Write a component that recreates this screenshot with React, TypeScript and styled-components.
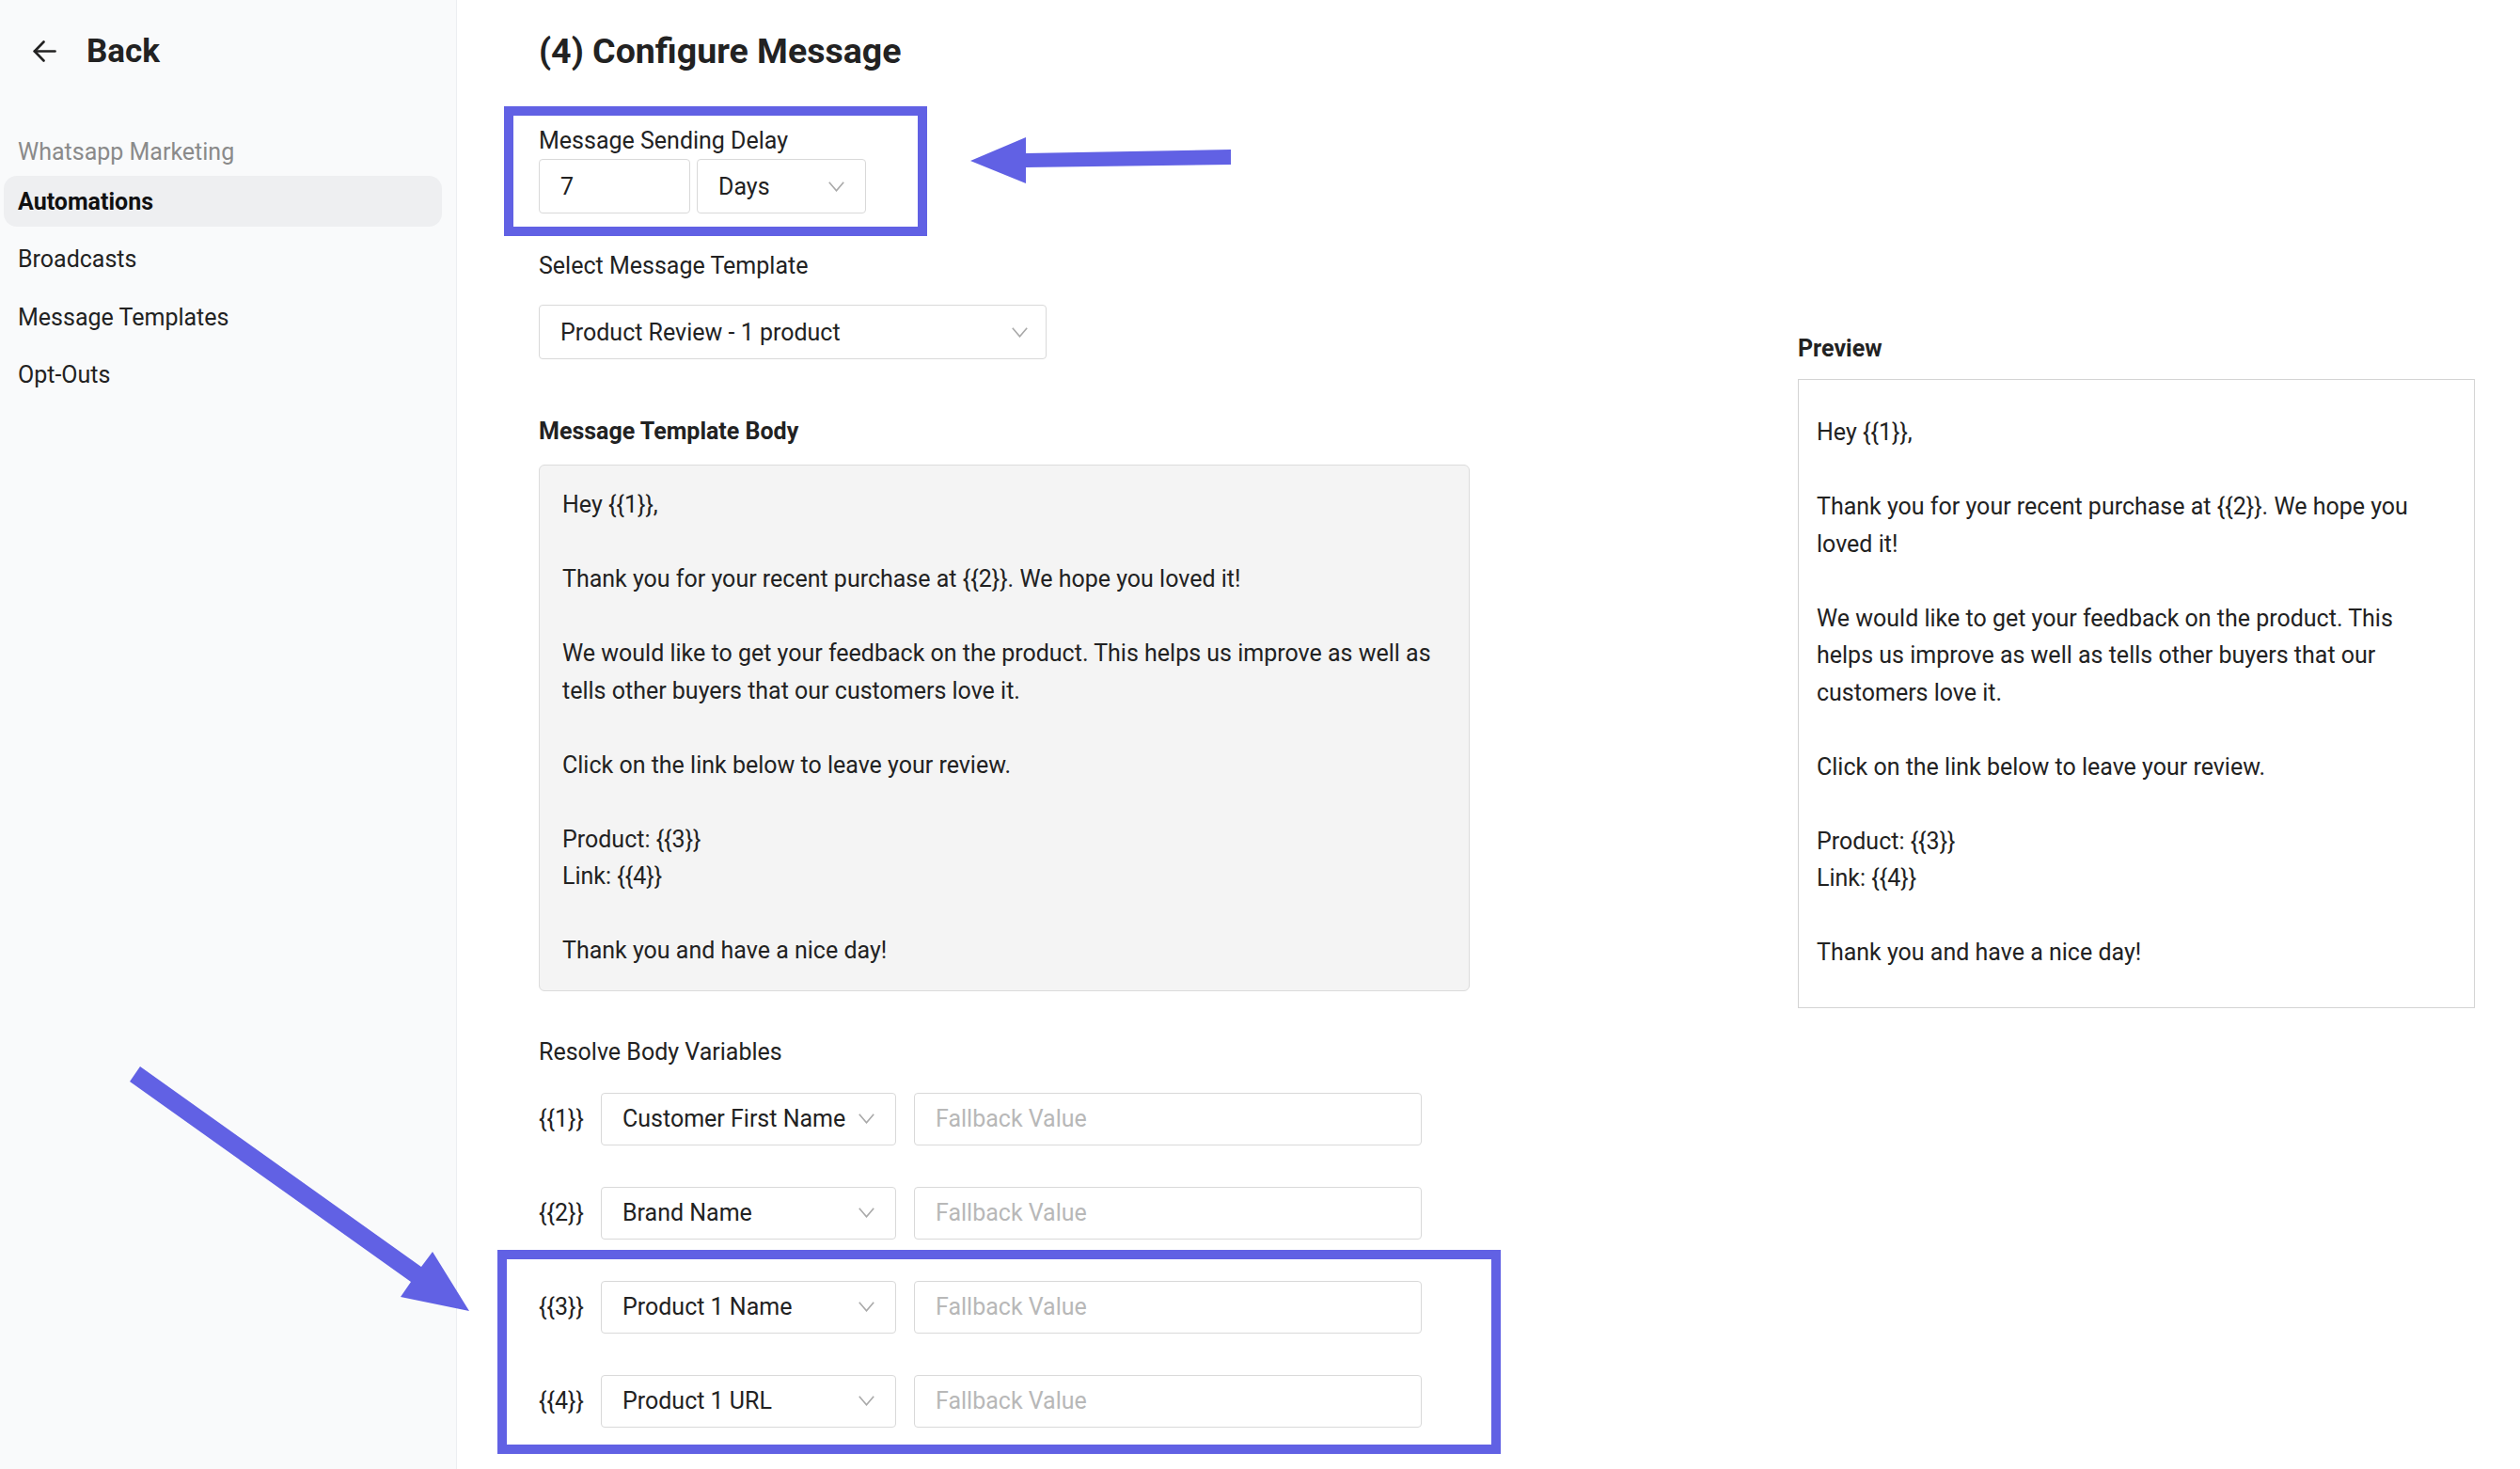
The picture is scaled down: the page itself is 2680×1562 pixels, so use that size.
import React from 'react';
import styled, { createGlobalStyle } from 'styled-components';

const GlobalStyle = createGlobalStyle`
  * { box-sizing: border-box; }
  html, body {
    margin: 0;
    padding: 0;
    background: #ffffff;
  }
  body {
    font-family: Roboto, 'Liberation Sans', Arial, sans-serif;
    color: #222222;
    overflow: hidden;
  }
`;

const accent = '#6161e4';

const Page = styled.div`
  position: relative;
  display: flex;
  width: 2680px;
  height: 1562px;
`;

const Sidebar = styled.aside`
  width: 486px;
  flex-shrink: 0;
  background: #f9fafb;
  box-shadow: inset -1px 0 0 #eceef1;
  padding-top: 29px;
`;

const BackRow = styled.div`
  display: flex;
  align-items: center;
  gap: 32px;
  height: 50px;
  padding-left: 35px;
  font-size: 35px;
  font-weight: 700;
  color: #222;
`;

const GroupTitle = styled.div`
  margin: 68px 0 10px 19px;
  font-size: 25px;
  line-height: 30px;
  color: #8a8a8a;
`;

const NavList = styled.nav`
  display: flex;
  flex-direction: column;
  gap: 7.5px;
`;

const NavItem = styled.div<{ $active?: boolean }>`
  display: flex;
  align-items: center;
  height: 54px;
  width: 466px;
  margin-left: 4px;
  padding-left: 15px;
  border-radius: 14px;
  font-size: 25px;
  font-weight: ${p => (p.$active ? 700 : 400)};
  color: ${p => (p.$active ? '#111' : '#222')};
  background: ${p => (p.$active ? '#eeeff1' : 'transparent')};
`;

const Main = styled.main`
  flex: 1;
  display: flex;
  padding: 0 48px 0 87px;
`;

const FormColumn = styled.div`
  width: 1040px;
  display: flex;
  flex-direction: column;
`;

const Title = styled.h1`
  margin: 31px 0 0;
  font-size: 37.5px;
  line-height: 46px;
  font-weight: 700;
  color: #222;
`;

const Section = styled.section<{ $mt: number }>`
  position: relative;
  margin-top: ${p => p.$mt}px;
`;

const Label = styled.div<{ $mb: number; $bold?: boolean }>`
  font-size: 25px;
  line-height: 30px;
  font-weight: ${p => (p.$bold ? 700 : 400)};
  margin-bottom: ${p => p.$mb}px;
  color: #222;
`;

const InputRow = styled.div`
  display: flex;
  gap: 7px;
`;

const Field = styled.div<{ $w: number; $h?: number; $placeholder?: boolean }>`
  display: flex;
  align-items: center;
  justify-content: space-between;
  width: ${p => p.$w}px;
  height: ${p => p.$h ?? 58}px;
  padding: 0 22px;
  border: 1px solid #d9d9d9;
  border-radius: 4px;
  background: #fff;
  font-size: 25px;
  color: ${p => (p.$placeholder ? '#b8b8b8' : '#222')};
  white-space: nowrap;
`;

const TemplateBody = styled.div`
  width: 990px;
  padding: 22px 24px;
  border: 1px solid #dcdcdc;
  border-radius: 6px;
  background: #f4f4f4;
  font-size: 25px;
  line-height: 39.5px;
  white-space: pre-wrap;
  color: #222;
`;

const Rows = styled.div`
  display: flex;
  flex-direction: column;
  gap: 44px;
`;

const RowsGroup = styled.div`
  position: relative;
  display: flex;
  flex-direction: column;
  gap: 44px;
`;

const VarRow = styled.div`
  display: flex;
  align-items: center;
`;

const VarLabel = styled.div`
  width: 47px;
  margin-right: 19px;
  font-size: 25px;
  color: #222;
`;

const VarFields = styled.div`
  display: flex;
  gap: 19px;
`;

const Annotation = styled.div<{ $top: number; $left: number; $w: number; $h: number }>`
  position: absolute;
  top: ${p => p.$top}px;
  left: ${p => p.$left}px;
  width: ${p => p.$w}px;
  height: ${p => p.$h}px;
  border: 10px solid ${accent};
  pointer-events: none;
`;

const PreviewColumn = styled.div`
  width: 720px;
  margin-left: auto;
  margin-top: 356px;
`;

const PreviewBox = styled.div`
  border: 1px solid #d4d4d4;
  padding: 36px 44px 38px 19px;
  font-size: 25px;
  line-height: 39.5px;
  white-space: pre-wrap;
  color: #222;
`;

const ArrowLayer = styled.svg`
  position: absolute;
  top: 0;
  left: 0;
  pointer-events: none;
`;

const BackArrow = () => (
  <svg width="25" height="23" viewBox="0 0 25 23" fill="none" stroke="#222" strokeWidth="2.6" strokeLinecap="round" strokeLinejoin="round">
    <path d="M23.5 11.5H1.8" />
    <path d="M11.5 1.5 1.8 11.5l9.7 10" />
  </svg>
);

const Chevron = () => (
  <svg width="17" height="11" viewBox="0 0 17 11" fill="none" stroke="#a9a9a9" strokeWidth="1.6">
    <polyline points="0.8,0.8 8.5,9.8 16.2,0.8" />
  </svg>
);

const bodyText = `Hey {{1}},

Thank you for your recent purchase at {{2}}. We hope you loved it!

We would like to get your feedback on the product. This helps us improve as well as tells other buyers that our customers love it.

Click on the link below to leave your review.

Product: {{3}}
Link: {{4}}

Thank you and have a nice day!`;

const variables = [
  { key: '{{1}}', source: 'Customer First Name' },
  { key: '{{2}}', source: 'Brand Name' },
  { key: '{{3}}', source: 'Product 1 Name' },
  { key: '{{4}}', source: 'Product 1 URL' },
];

const VariableRow: React.FC<{ name: string; source: string }> = ({ name, source }) => (
  <VarRow>
    <VarLabel>{name}</VarLabel>
    <VarFields>
      <Field $w={314} $h={56}>
        {source}
        <Chevron />
      </Field>
      <Field $w={540} $h={56} $placeholder>
        Fallback Value
      </Field>
    </VarFields>
  </VarRow>
);

const App: React.FC = () => {
  const navItems = ['Automations', 'Broadcasts', 'Message Templates', 'Opt-Outs'];

  return (
    <>
      <GlobalStyle />
      <Page>
        <Sidebar>
          <BackRow>
            <BackArrow />
            Back
          </BackRow>
          <GroupTitle>Whatsapp Marketing</GroupTitle>
          <NavList>
            {navItems.map((item, i) => (
              <NavItem key={item} $active={i === 0}>
                {item}
              </NavItem>
            ))}
          </NavList>
        </Sidebar>

        <Main>
          <FormColumn>
            <Title>(4) Configure Message</Title>

            <Section $mt={58} style={{ width: 348 }}>
              <Label $mb={4}>Message Sending Delay</Label>
              <InputRow>
                <Field $w={161}>7</Field>
                <Field $w={180}>
                  Days
                  <Chevron />
                </Field>
              </InputRow>
              <Annotation $top={-22} $left={-37} $w={450} $h={138} />
            </Section>

            <Section $mt={41}>
              <Label $mb={26}>Select Message Template</Label>
              <Field $w={540} style={{ paddingRight: 19 }}>
                Product Review - 1 product
                <Chevron />
              </Field>
            </Section>

            <Section $mt={62}>
              <Label $mb={20} $bold>
                Message Template Body
              </Label>
              <TemplateBody>{bodyText}</TemplateBody>
            </Section>

            <Section $mt={50}>
              <Label $mb={28}>Resolve Body Variables</Label>
              <Rows>
                {variables.slice(0, 2).map(v => (
                  <VariableRow key={v.key} name={v.key} source={v.source} />
                ))}
                <RowsGroup>
                  {variables.slice(2).map(v => (
                    <VariableRow key={v.key} name={v.key} source={v.source} />
                  ))}
                  <Annotation $top={-33} $left={-44} $w={1067} $h={217} />
                </RowsGroup>
              </Rows>
            </Section>
          </FormColumn>

          <PreviewColumn>
            <Label $mb={17} $bold>
              Preview
            </Label>
            <PreviewBox>{bodyText}</PreviewBox>
          </PreviewColumn>
        </Main>

        <ArrowLayer width="2680" height="1562" viewBox="0 0 2680 1562">
          <polygon
            fill={accent}
            points="1032,171 1091,146 1091,163 1309,159 1309,175 1091,178 1091,195"
          />
          <polygon
            fill={accent}
            points="149,1134 448,1347 460,1331 499,1394 426,1379 437,1363 138,1150"
          />
        </ArrowLayer>
      </Page>
    </>
  );
};

export default App;
